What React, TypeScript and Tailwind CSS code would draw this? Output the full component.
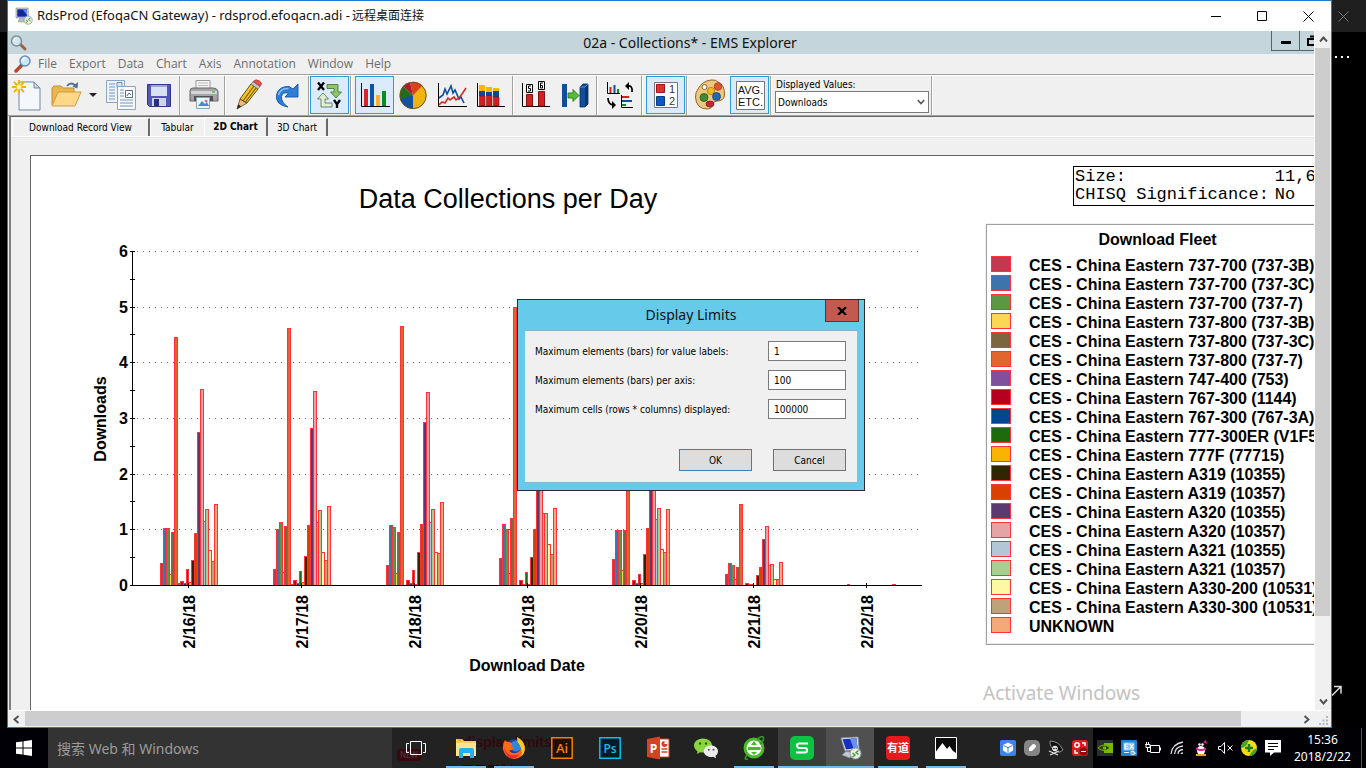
import React from "react";

type IconProps = { children: React.ReactNode };

const FLEET: { name: string; color: string }[] = [
  { name: "CES - China Eastern 737-700 (737-3B)", color: "#c3384f" },
  { name: "CES - China Eastern 737-700 (737-3C)", color: "#3d74a9" },
  { name: "CES - China Eastern 737-700 (737-7)", color: "#5b9744" },
  { name: "CES - China Eastern 737-800 (737-3B)", color: "#f9d854" },
  { name: "CES - China Eastern 737-800 (737-3C)", color: "#7b6640" },
  { name: "CES - China Eastern 737-800 (737-7)", color: "#e1662b" },
  { name: "CES - China Eastern 747-400 (753)", color: "#80509f" },
  { name: "CES - China Eastern 767-300 (1144)", color: "#b5001f" },
  { name: "CES - China Eastern 767-300 (767-3A)", color: "#00488d" },
  { name: "CES - China Eastern 777-300ER (V1F5", color: "#1e6b0c" },
  { name: "CES - China Eastern 777F (77715)", color: "#fab400" },
  { name: "CES - China Eastern A319 (10355)", color: "#332404" },
  { name: "CES - China Eastern A319 (10357)", color: "#d84100" },
  { name: "CES - China Eastern A320 (10355)", color: "#5a3a70" },
  { name: "CES - China Eastern A320 (10357)", color: "#e5a3a5" },
  { name: "CES - China Eastern A321 (10355)", color: "#b2c6d8" },
  { name: "CES - China Eastern A321 (10357)", color: "#a9cd90" },
  { name: "CES - China Eastern A330-200 (10531)", color: "#fff8a2" },
  { name: "CES - China Eastern A330-300 (10531)", color: "#bfa27a" },
  { name: "UNKNOWN", color: "#f3a978" },
];

const DAYS: { date: string; bars: number[] }[] = [
  { date: "2/16/18", bars: [22, 57, 57, 11, 53, 248, 2, 4, 2, 16, 3, 25, 52, 153, 196, 64, 76, 35, 24, 81] },
  { date: "2/17/18", bars: [16, 56, 63, 13, 59, 257, 1, 5, 2, 14, 3, 29, 60, 157, 194, 63, 75, 33, 25, 79] },
  { date: "2/18/18", bars: [20, 60, 58, 12, 53, 259, 0, 5, 2, 15, 1, 33, 61, 163, 193, 63, 76, 33, 32, 83] },
  { date: "2/19/18", bars: [27, 61, 56, 12, 67, 278, 0, 5, 1, 13, 1, 28, 56, 150, 190, 72, 72, 41, 31, 77] },
  { date: "2/20/18", bars: [26, 55, 55, 15, 55, 250, 0, 5, 2, 11, 2, 31, 57, 150, 190, 66, 77, 36, 33, 76] },
  { date: "2/21/18", bars: [11, 22, 20, 6, 18, 81, 0, 2, 1, 1, 0, 10, 18, 46, 59, 20, 21, 6, 6, 23] },
  { date: "2/22/18", bars: [0, 0, 0, 1, 0, 0, 0, 0, 0, 0, 0, 0, 0, 0, 0, 0, 0, 0, 0, 1] },
];

const BASE = 585;
const UNIT = 55.67;

function Chart() {
  const gridY = (n: number) => Math.round(BASE - n * UNIT);
  return (
    <svg
      viewBox="31 156 953 554"
      width={953}
      height={554}
      className="block shrink-0"
      role="img"
      aria-label="Data Collections per Day"
      fontFamily="'Liberation Sans', Arial, sans-serif"
    >
      <text x={508} y={208} textAnchor="middle" fontSize={27}>Data Collections per Day</text>
      {[1, 2, 3, 4, 5, 6].map((n) => (
        <line key={n} x1={137} x2={921} y1={gridY(n) + 0.5} y2={gridY(n) + 0.5} stroke="#707070" strokeDasharray="1 5" shapeRendering="crispEdges" />
      ))}
      <g fontSize={16} fontWeight={700}>
        {[0, 1, 2, 3, 4, 5, 6].map((n) => (
          <text key={n} x={128} y={gridY(n) + 6} textAnchor="end">{n}</text>
        ))}
        {DAYS.map((d, i) => {
          const x = 195 + i * 113;
          return (
            <text key={d.date} x={x} y={595} transform={`rotate(-90 ${x} 595)`} textAnchor="end">{d.date}</text>
          );
        })}
        <text x={527} y={671} textAnchor="middle">Download Date</text>
        <text x={106} y={419} textAnchor="middle" transform="rotate(-90 106 419)">Downloads</text>
      </g>
      <g shapeRendering="crispEdges">
        {DAYS.map((d, i) =>
          d.bars.map((h, j) => {
            if (h === 0) return null;
            const start = 160 + i * 113;
            const x = Math.round(start + j * 2.84);
            const next = Math.round(start + (j + 1) * 2.84);
            return (
              <rect key={`${i}-${j}`} x={x + 0.5} y={BASE - h + 0.5} width={next - x} height={h} fill={FLEET[j].color} stroke="#ff3237" />
            );
          }),
        )}
        <line x1={132.5} x2={132.5} y1={251} y2={586} stroke="#000" />
        <line x1={130} x2={922} y1={585.5} y2={585.5} stroke="#000" />
        {Array.from({ length: 13 }, (_, k) => {
          const y = Math.round(BASE - (k * UNIT) / 2) + 0.5;
          return <line key={k} x1={130} x2={135} y1={y} y2={y} stroke="#000" />;
        })}
        {DAYS.map((d, i) => (
          <line key={d.date} x1={188.5 + i * 113} x2={188.5 + i * 113} y1={583} y2={588} stroke="#000" />
        ))}
      </g>
    </svg>
  );
}

function Icon({ children }: IconProps) {
  return (
    <svg viewBox="0 0 35 34" width={35} height={34} className="block" aria-hidden="true">
      {children}
    </svg>
  );
}

function Tool({ label, active, children }: { label: string; active?: boolean; children: React.ReactNode }) {
  return (
    <button
      type="button"
      aria-label={label}
      className={
        active
          ? "h-[38px] w-[39px] shrink-0 border border-[#26a0da] bg-[#dcebfc] p-px"
          : "h-[38px] w-[39px] shrink-0 border border-transparent p-px"
      }
    >
      <Icon>{children}</Icon>
    </button>
  );
}

function Sep() {
  return (
    <div className="flex w-[6px] shrink-0 self-stretch pl-px" aria-hidden="true">
      <div className="w-0.5 border-l border-r border-l-[#a0a0a0] border-r-white" />
    </div>
  );
}

function Magnifier({ flip }: { flip?: boolean }) {
  return flip ? (
    <svg viewBox="0 0 18 18" width={18} height={18} aria-hidden="true">
      <path d="M8 10 2 16" stroke="#b5482f" strokeWidth="3.4" strokeLinecap="round" />
      <path d="M8 9 6.500 10.500" stroke="#555" strokeWidth="2.500" />
      <circle cx="11" cy="6" r="5" fill="#c9e9fa" stroke="#6b90b5" strokeWidth="1.500" />
      <path d="M8.500 6a3 3 0 0 1 3-3" stroke="#fff" strokeWidth="1.500" fill="none" />
    </svg>
  ) : (
    <svg viewBox="0 0 18 18" width={18} height={18} aria-hidden="true">
      <path d="m10 10 5 5" stroke="#a0623a" strokeWidth="3" strokeLinecap="round" />
      <circle cx="6.500" cy="7" r="5" fill="#d3e6f0" stroke="#7c8e99" strokeWidth="1.500" />
      <path d="M4 7a3 3 0 0 1 3-3" stroke="#fff" strokeWidth="1.200" fill="none" />
    </svg>
  );
}

function RdpIcon({ size, tilted }: { size: number; tilted?: boolean }) {
  return (
    <svg viewBox="0 0 24 24" width={size} height={size} aria-hidden="true">
      {tilted ? (
        <>
          <path d="M3 2 20 1l1 12-14 2z" fill="#e3e8ef" stroke="#8893a0" strokeWidth=".8" />
          <path d="m4.500 3.300 14-1L19.500 12 8 13.500z" fill="#1430c4" />
          <path d="m12 2.800 6.500-.5L19.500 12l-4 .5z" fill="#6d90f0" />
          <path d="M8 15.500 4 19l8 3 3-6z" fill="#c3cad4" stroke="#808a96" strokeWidth=".6" />
        </>
      ) : (
        <>
          <path d="M1.500 1.500h16v13h-16z" fill="#e3e8ef" stroke="#77808c" />
          <path d="M3 3h13v10H3z" fill="#12279c" />
          <path d="M10 3h6v8z" fill="#5f86e6" />
          <path d="M6 15h7v2.500h2.500V20h-11v-2.500H6z" fill="#b6bdc8" stroke="#77808c" strokeWidth=".6" />
        </>
      )}
      <circle cx="17.500" cy="17.500" r="5.500" fill="#e8ece8" stroke="#8f9892" />
      <path d="m14.500 17 2.500 2-2.500 2M20.500 14.500l-2.500 2 2.500 2" stroke="#3c9a2b" strokeWidth="1.300" fill="none" />
    </svg>
  );
}

function Toolbar() {
  return (
    <div className="flex h-[39px] shrink-0 items-start">
      <Tool label="New">
        <path d="M9 4h15l6 6v22H9z" fill="#f4f8fd" stroke="#7188a6" />
        <path d="M24 4v6h6z" fill="#c7d6e8" stroke="#7188a6" />
        <path d="M9 2v14M2 9h14M4 4l10 10M14 4 4 14" stroke="#f0b400" strokeWidth="1.800" />
        <circle cx="9" cy="9" r="2.500" fill="#fff3a0" />
      </Tool>
      <Tool label="Open">
        <path d="M3 27V10l2-2h7l2 2h11v5" fill="#e9b74e" stroke="#c18f32" />
        <path d="m3 28 6-14h23l-6 14z" fill="#fbd988" stroke="#cf9c3d" />
        <path d="M18 8q4-5 9 0" fill="none" stroke="#4e6e93" strokeWidth="1.800" />
        <path d="m29 4-.5 6.500-5-2z" fill="#4e6e93" />
      </Tool>
      <button type="button" aria-label="Open recent" className="flex h-[38px] w-[14px] shrink-0 items-center justify-center">
        <svg viewBox="0 0 8 4" width={8} height={4}><path d="M0 0h8L4 4z" fill="#222" /></svg>
      </button>
      <Tool label="Copy">
        <path d="M4.500 2.500h18v22h-18z" fill="#eef3fa" stroke="#8ba4c4" />
        <path d="M7 6h6M7 9h6M7 12h6M7 15h6M7 18h6M7 21h6" stroke="#7897bd" />
        <path d="M15 4.500h5v5h-5z" fill="#d8e6f5" stroke="#6d8db5" />
        <path d="M15.500 8.500h18v23h-18z" fill="#f6f9fd" stroke="#8ba4c4" />
        <path d="M18 12h4M18 15h4M18 18h4M18 22h13M18 25h13M18 28h13" stroke="#7897bd" />
        <path d="M23.500 12.500h7v7h-7z" fill="#fff" stroke="#5c6f88" />
        <path d="m25 18 2-3 2 2" stroke="#50658a" fill="none" />
      </Tool>
      <Tool label="Save">
        <path d="M6.500 6.500h23v22h-21l-2-2z" fill="#5357b8" stroke="#31358c" />
        <path d="M10 7h16v11H10z" fill="#d9e2f3" />
        <path d="M10 7h16v2H10z" fill="#9aa5d8" />
        <path d="M11 20h14v8H11z" fill="#cfd4e6" />
        <path d="M13 21h5v7h-5z" fill="#2b2e7c" />
      </Tool>
      <Sep />
      <Tool label="Print">
        <path d="M10 2.500h14V14H10z" fill="#f4f4f4" stroke="#999" />
        <path d="M12 5h10M12 7.500h10" stroke="#bbb" />
        <path d="M4 13q0-3 3-3h20q4 0 5 3v10H4z" fill="#a5a5a8" stroke="#66666a" />
        <path d="M5 13h26v3H5z" fill="#d6d6d8" />
        <path d="M8 18h19v5H8z" fill="#4f4f55" />
        <path d="M26 14h3" stroke="#4ec04e" strokeWidth="1.500" />
        <path d="M10.500 19.500h13v11h-13z" fill="#e9f4fc" stroke="#8aa" />
        <path d="m12 28 4-5 3 3 2-2 2 4z" fill="#3e8ed0" />
        <circle cx="20" cy="23" r="1.300" fill="#e58" />
      </Tool>
      <Sep />
      <Tool label="Annotate">
        <path d="M6 31 9 21l7 4z" fill="#e9b97f" stroke="#6e4a1b" strokeWidth=".8" />
        <path d="m6 31 1.200-4.500 3 1.800z" fill="#222" />
        <path d="M9 21 20 6l7 5-11 14z" fill="#f4c521" stroke="#53400c" strokeWidth=".9" />
        <path d="m12 23 11-15M14.500 24 25 10" stroke="#7a5c0c" strokeWidth="1.200" />
        <path d="m20 6 2-2.500 7 5-2 2.500z" fill="#c3c9d2" stroke="#666" strokeWidth=".7" />
        <path d="M22 3.500q3-3 6.500-.5T29 8.500z" fill="#e8504c" stroke="#a3302d" strokeWidth=".7" />
      </Tool>
      <Tool label="Redo">
        <path d="M18 29Q5 27 6.500 16.500 9 8 19 8.500L23 11l5-5v13H15l3.500-3.800q-6-1.700-7 3.300-.5 6 6.500 10.500z" fill="#2e7fd4" stroke="#1455a4" strokeWidth=".9" />
        <path d="M8.500 17q2-7 10-6.500" stroke="#8dc0f2" strokeWidth="1.500" fill="none" />
      </Tool>
      <div className="flex w-[3px] shrink-0 self-stretch pl-px" aria-hidden="true">
        <div className="w-0.5 border-l border-r border-l-[#a0a0a0] border-r-white" />
      </div>
      <Tool label="Swap X and Y" active>
        <path d="m6 4.500 6 7.500M12 4.500 6 12" stroke="#000" strokeWidth="2.300" />
        <path d="m22 22 3 4.200 3-4.200M25 26v4" stroke="#000" strokeWidth="2.300" fill="none" />
        <path d="M15 6.500h11V14h3.500L24 20l-5.500-6H22v-3.500h-7z" fill="#8cc66a" stroke="#4c7a34" strokeWidth=".9" />
        <path d="M20 29H9v-8H5.500L11 15l5.500 6H13v4h7z" fill="#e2efd8" stroke="#5d7a4c" strokeWidth=".9" />
      </Tool>
      <Sep />
      <Tool label="Bar chart" active>
        <path d="M4.500 5v23.500H33" stroke="#000" fill="none" />
        <path d="M7 11h4v17H7z" fill="#d8242a" />
        <path d="M13 6h4v22h-4z" fill="#0c53ad" />
        <path d="M19 17h4v11h-4z" fill="#fbb034" />
        <path d="M25 13h4v15h-4z" fill="#0a8f1c" />
      </Tool>
      <Tool label="Pie chart">
        <path d="M17 17.500V31A13.500 13.500 0 0 1 4 17.500z" fill="#1450a0" />
        <path d="M17 17.500V31a13.500 13.500 0 0 0 9-23.500z" fill="#f0b411" />
        <path d="m17 17.500 9.500-10A13.500 13.500 0 0 0 14 4.200z" fill="#d8431c" />
        <path d="M17 17.500 14 4.200A13 13 0 0 0 7 8z" fill="#b8182a" />
        <path d="M17 17.500 7 8q-4 5-3 13z" fill="#1d6f1d" />
        <circle cx="17" cy="17.500" r="13.200" fill="none" stroke="#6b5520" />
      </Tool>
      <Tool label="Line chart">
        <path d="M3.500 5v23.500H32" stroke="#000" fill="none" />
        <path d="m4 20 4-3 2-6 2 5 4-8 2 7 2-3 4 9 2-2 3 6" stroke="#0c4ea2" strokeWidth="1.600" fill="none" />
        <path d="m4 27 3-3 3 1 3-5 2 2 4-3 2 3 3-2 3-4 4-6" stroke="#d42a2a" strokeWidth="1.600" fill="none" />
      </Tool>
      <Tool label="Stacked chart">
        <path d="M3.500 5v23.500H31" stroke="#000" fill="none" />
        <path d="M5 7h6v6H5zM12 9h6v5h-6zM19 10h6v4h-6z" fill="#fbb400" />
        <path d="M5 13h6v5H5zM12 14h6v4h-6zM19 13h6v6h-6z" fill="#0b479a" />
        <path d="M5.500 18h5.500v10H5.500zM12.500 17.500H18V28h-5.500zM19.500 19H25v9h-5.500z" fill="#cf2020" stroke="#7e1414" strokeWidth=".6" />
      </Tool>
      <Sep />
      <Tool label="Value labels">
        <path d="M3.500 5v23.500H31" stroke="#000" fill="none" />
        <path d="M7.500 16.500h6V28h-6zM19.500 13.500h6V28h-6z" fill="#d42020" stroke="#7e1414" />
        <path d="M7.500 6.500h6v8h-6zM19.500 3.500h6v8h-6z" fill="#fff" stroke="#000" />
        <path d="M12 8H9.500v2.500h2v2.500H9M24 5h-2.500v5h2V7.500h-2" stroke="#000" fill="none" />
      </Tool>
      <Tool label="3D bars">
        <path d="M4 6h5v23H4z" fill="#0f4f9e" />
        <path d="M10 15h5v-3.500l6 6-6 6V20h-5z" fill="#58bc3b" stroke="#2b7a1e" strokeWidth=".9" />
        <path d="m22 9 3-3h5v20l-3 3h-5z" fill="#0f4f9e" stroke="#08284f" strokeWidth=".8" />
        <path d="m27 9 3-3v20l-3 3z" fill="#07356f" />
        <path d="M22 9h5l3-3" stroke="#5a93d4" fill="none" />
      </Tool>
      <Sep />
      <Tool label="Rotate chart">
        <path d="M4.500 4v11.500H17" stroke="#000" fill="none" />
        <path d="M7.500 9v6" stroke="#d42020" strokeWidth="2" />
        <path d="M11.500 7v8" stroke="#0c4ea2" strokeWidth="2" />
        <path d="M15 11v4" stroke="#0a8f1c" strokeWidth="2" />
        <path d="M18.500 17v12.500H30" stroke="#000" fill="none" />
        <path d="M19 19h7" stroke="#d42020" strokeWidth="2" />
        <path d="M19 23h10" stroke="#0c4ea2" strokeWidth="2" />
        <path d="M19 27h4" stroke="#0a8f1c" strokeWidth="2" />
        <path d="M24 8q6-1 5 6M5 20q0 6 5 7" stroke="#000" strokeWidth="1.700" fill="none" />
        <path d="m22 8 4-4v8zM13 27l-4-4v8z" fill="#000" />
      </Tool>
      <Sep />
      <Tool label="Legend" active>
        <path d="M6.500 4.500h23v25h-23z" fill="#fff" stroke="#777" />
        <path d="M8.500 6.500h8v8h-8z" fill="#e23030" stroke="#9d1515" />
        <path d="M8.500 18.500h8v9h-8z" fill="#0c5ac0" stroke="#0a3d80" />
        <text x="21" y="15" fontSize="11" fill="#333" fontFamily="'Liberation Sans', sans-serif">1</text>
        <text x="21" y="27" fontSize="11" fill="#333" fontFamily="'Liberation Sans', sans-serif">2</text>
      </Tool>
      <Sep />
      <Tool label="Colors">
        <path d="M5 11q4-8 13-9 5-.5 7 2 7 3 6.500 13-.5 6-7.500 6-4 0-4.500 4-1 4-5 4Q3 31 2.500 19 2.500 14 5 11z" fill="#eec77e" stroke="#8c6428" />
        <circle cx="11.500" cy="9" r="2.500" fill="#fff" stroke="#8c6428" />
        <circle cx="25" cy="8.500" r="3.800" fill="#e3552c" stroke="#93341a" strokeWidth=".7" />
        <circle cx="18" cy="13" r="3.600" fill="#f5b921" stroke="#9c7008" strokeWidth=".7" />
        <circle cx="11" cy="19.500" r="4" fill="#3d8b37" stroke="#1d541a" strokeWidth=".7" />
        <circle cx="23.500" cy="18.500" r="4" fill="#2467b5" stroke="#123b70" strokeWidth=".7" />
        <ellipse cx="17" cy="26" rx="4" ry="3" fill="#c92439" stroke="#781020" strokeWidth=".7" />
      </Tool>
      <Tool label="Statistics" active>
        <path d="M4.500 3.500h28v28h-28z" fill="#fff" stroke="#777" />
        <g fontFamily="'Liberation Sans', sans-serif" fontSize="11" fill="#111">
          <text x="18.500" y="16" textAnchor="middle">AVG.</text>
          <text x="18.500" y="28" textAnchor="middle">ETC.</text>
        </g>
      </Tool>
      <Sep />
      <div className="mr-px flex w-[154px] shrink-0 flex-col pt-[3px] font-['DejaVu_Sans_Condensed','Noto_Sans',sans-serif]">
        <label htmlFor="displayed" className="h-3 pl-px text-[10px] leading-3 text-black">Displayed Values:</label>
        <div className="relative">
          <select id="displayed" defaultValue="Downloads" className="block h-[22px] w-full appearance-none border border-[#7a7a7a] bg-white pl-[2px] text-[10px] text-black">
            <option>Downloads</option>
          </select>
          <svg viewBox="0 0 8 6" width={8} height={6} className="pointer-events-none absolute right-1 top-2" aria-hidden="true">
            <path d="m.8 1 3.200 3.500L7.200 1" fill="none" stroke="#555" strokeWidth="1.600" />
          </svg>
        </div>
      </div>
      <Sep />
    </div>
  );
}

function LimitField({ id, label, value }: { id: string; label: string; value: string }) {
  return (
    <div className="flex h-5 items-center justify-between">
      <label htmlFor={id}>{label}</label>
      <input id={id} defaultValue={value} className="h-5 w-[78px] border border-[#7a7a7a] bg-white pl-[5px] text-[10px]" />
    </div>
  );
}

function LimitsDialog() {
  return (
    <div role="dialog" aria-labelledby="limits-title" className="absolute left-[509px] top-[268px] w-[348px] border border-[#2b2b33] bg-[#66caea] px-[7px] pb-[7px]">
      <div className="flex h-[30px] items-center justify-center">
        <h2 id="limits-title" className="text-[14px] leading-none text-[#111]">Display Limits</h2>
      </div>
      <button type="button" aria-label="Close" className="absolute right-[5px] top-0 flex h-[22px] w-[34px] items-center justify-center border border-t-0 border-[#5b3536] bg-[#c35a50]">
        <svg viewBox="0 0 10 8" width={10} height={8}><path d="m1 0 8 8M9 0 1 8" stroke="#000" strokeWidth="2.200" /></svg>
      </button>
      <form className="flex flex-col gap-[9px] border-b border-t border-[#86b4cf] bg-[#f0f0f0] pb-[11px] pl-[10px] pr-[11px] pt-[10px] font-['DejaVu_Sans_Condensed','Noto_Sans',sans-serif] text-[10px] text-black" onSubmit={(e) => e.preventDefault()}>
        <LimitField id="max-labels" label="Maximum elements (bars) for value labels:" value="1" />
        <LimitField id="max-axis" label="Maximum elements (bars) per axis:" value="100" />
        <LimitField id="max-cells" label="Maximum cells (rows * columns) displayed:" value="100000" />
        <div className="flex justify-end gap-[21px] pt-[21px]">
          <button type="submit" className="h-[22px] w-[73px] border border-[#3c7fb1] bg-[#ddd]">OK</button>
          <button type="button" className="h-[22px] w-[73px] border border-[#707070] bg-[#ddd]">Cancel</button>
        </div>
      </form>
    </div>
  );
}

function Legend() {
  return (
    <div className="ml-px mt-[17px] w-[341px] border border-[#f0f0f0] border-b-[#a0a0a0]">
      <div className="border border-[#a0a0a0] border-b-[#e8e8e8] pb-[7px] pl-1 text-[16px] font-bold text-black">
        <h2 className="pb-[7px] pt-[5px] text-center leading-[19px]">Download Fleet</h2>
        <ul>
          {FLEET.map((f) => (
            <li key={f.name} className="flex h-[19px] items-start gap-[18px] whitespace-nowrap leading-[19px]">
              <span className="h-4 w-5 shrink-0 border border-[#ff3237]" style={{ backgroundColor: f.color }} />
              <span>{f.name}</span>
            </li>
          ))}
        </ul>
      </div>
    </div>
  );
}

function ExplorerWindow() {
  return (
    <div className="relative flex min-w-0 flex-1 flex-col overflow-hidden bg-[#f0f0f0] font-['Noto_Sans',sans-serif]">
      <div className="relative flex h-[23px] shrink-0 items-center bg-[#c4d5dc] pl-[2px]">
        <Magnifier />
        <h1 className="flex-1 pl-[38px] text-center text-[14px] leading-none text-[#111]">02a - Collections* - EMS Explorer</h1>
        <div className="absolute right-0 top-0 flex h-5 w-[43px] overflow-hidden border-b border-l border-[#5a6468]">
          <button type="button" aria-label="Minimize" className="flex h-full w-7 shrink-0 items-center justify-center border-r border-[#5a6468]">
            <svg viewBox="0 0 10 6" width={10} height={6}><path d="M0 3h10v3H0z" /></svg>
          </button>
          <button type="button" aria-label="Restore" className="flex h-full w-7 shrink-0 items-center pl-[7px]">
            <svg viewBox="0 0 12 12" width={12} height={12}><path d="M1 4h8v6H1zM3 1.500h8V7" fill="none" stroke="#000" strokeWidth="2" /></svg>
          </button>
        </div>
      </div>
      <nav className="flex h-5 shrink-0 items-center pl-[6px] text-[12px] text-[#6d6d6d]">
        <Magnifier flip />
        <div className="flex gap-3 pl-[6px] font-['Open_Sans',sans-serif]">
          {["File", "Export", "Data", "Chart", "Axis", "Annotation", "Window", "Help"].map((m) => (
            <button key={m} type="button">{m}</button>
          ))}
        </div>
      </nav>
      <div className="shrink-0 border-b border-t border-b-[#a0a0a0] border-t-[#a0a0a0]">
        <div className="border-t border-white"><Toolbar /></div>
      </div>
      <div className="ml-px flex min-h-0 flex-1 flex-col border-l-2 border-t border-l-[#808080] border-t-[#696969]">
        <div role="tablist" className="flex h-5 shrink-0 items-end border-b border-white pl-px font-['DejaVu_Sans_Condensed','Noto_Sans',sans-serif] text-[10px] leading-4 text-black">
          <button role="tab" type="button" className="h-[18px] w-[138px] border-l border-r-2 border-t border-l-white border-r-[#696969] border-t-white">Download Record View</button>
          <button role="tab" type="button" className="h-[18px] w-[54px] border-l border-t border-white">Tabular</button>
          <button role="tab" type="button" aria-selected="true" className="h-[19px] w-[64px] border-l border-r-2 border-t border-l-white border-r-[#696969] border-t-white font-bold">2D Chart</button>
          <button role="tab" type="button" className="h-[18px] w-[60px] border-r-2 border-t border-r-[#696969] border-t-white">3D Chart</button>
        </div>
        <div className="flex min-h-0 flex-1 border-t border-[#e3e3e3] pl-[19px] pt-[17px]">
          <div className="flex min-w-0 flex-1 overflow-hidden border-l border-t border-[#646464] bg-white font-['Liberation_Sans',Arial,sans-serif]">
            <Chart />
            <div className="min-w-0 flex-1 pt-[10px]">
              <dl className="ml-[89px] grid w-[280px] grid-cols-[auto_1fr] gap-x-[6px] border border-black py-px pl-px font-['Liberation_Mono','Courier_New',monospace] text-[17px] leading-[18px] text-black">
                <dt>Size:</dt>
                <dd>11,6</dd>
                <dt>CHISQ Significance:</dt>
                <dd>No</dd>
              </dl>
              <Legend />
            </div>
          </div>
        </div>
      </div>
      <p className="pointer-events-none absolute bottom-[3px] right-[174px] text-[19px] leading-7 text-[#c3c3c3]">Activate Windows</p>
      <LimitsDialog />
    </div>
  );
}

function Chevron({ d }: { d: string }) {
  return (
    <svg viewBox="0 0 9 9" width={9} height={9} aria-hidden="true">
      <path d={d} fill="none" stroke="#505050" strokeWidth="1.900" />
    </svg>
  );
}

function RemoteWindow() {
  return (
    <main className="flex min-w-0 flex-1 flex-col border border-[#1c7cd0] bg-white">
      <header className="flex h-[30px] shrink-0 items-center pl-[7px] font-['Noto_Sans','Noto_Sans_CJK_SC',sans-serif]">
        <RdpIcon size={18} />
        <span className="flex items-baseline gap-0.5 pl-1 text-[#111]">
          <span className="text-[13px]">RdsProd (EfoqaCN Gateway) - rdsprod.efoqacn.adi -</span>
          <span className="text-[12px]">远程桌面连接</span>
        </span>
        <div className="ml-auto flex h-full">
          <button type="button" aria-label="Minimize" className="flex w-[46px] items-center justify-center"><svg viewBox="0 0 11 11" width={11} height={11}><path d="M0 5.500h10" stroke="#000" /></svg></button>
          <button type="button" aria-label="Maximize" className="flex w-[46px] items-center justify-center"><svg viewBox="0 0 11 11" width={11} height={11}><path d="M.5.5h9v9h-9z" fill="none" stroke="#000" /></svg></button>
          <button type="button" aria-label="Close" className="flex w-[46px] items-center justify-center"><svg viewBox="0 0 11 11" width={11} height={11}><path d="m.5.5 10 10m0-10-10 10" stroke="#000" /></svg></button>
        </div>
      </header>
      <div className="flex min-h-0 flex-1">
        <ExplorerWindow />
        <div className="ml-px flex w-4 shrink-0 flex-col items-center bg-[#f0f0f0]">
          <div className="flex h-[17px] items-center"><Chevron d="m1 6.500 3.500-4L8 6.500" /></div>
          <div className="flex min-h-0 w-full flex-1 flex-col"><div className="h-[88%] w-[15px] bg-[#cdcdcd]" /></div>
          <div className="flex h-[17px] items-center"><Chevron d="m1 2.500 3.500 4L8 2.500" /></div>
        </div>
      </div>
      <div className="mt-px flex h-4 shrink-0 items-center bg-[#f0f0f0]">
        <div className="flex w-[17px] justify-center"><Chevron d="m6.500 1-4 3.500 4 3.500" /></div>
        <div className="flex h-[15px] flex-1 self-start"><div className="w-[95.5%] bg-[#cdcdcd]" /></div>
        <div className="flex w-[17px] justify-center"><Chevron d="m2.500 1 4 3.500-4 3.500" /></div>
        <div className="flex w-4 justify-end self-end pb-[2px] pr-[3px]">
          <svg viewBox="0 0 9 9" width={9} height={9} aria-hidden="true"><path d="M7 0h2v2H7zM3.500 3.500h2v2h-2zM7 3.500h2v2H7zM0 7h2v2H0zM3.500 7h2v2h-2zM7 7h2v2H7z" fill="#b8b8b8" /></svg>
        </div>
      </div>
    </main>
  );
}

function AppButton({ label, state, children }: { label: string; state?: "open" | "bright" | "active"; children: React.ReactNode }) {
  const bg = state === "active" ? "bg-[#505050]" : state === "bright" ? "bg-[#3c3c3c]" : "";
  return (
    <button type="button" aria-label={label} className={`flex h-full w-12 shrink-0 flex-col items-center ${bg}`}>
      <span className="flex flex-1 items-center justify-center pt-0.5">{children}</span>
      {state === "open" && <span className="h-0.5 w-10 bg-[#76b9ed]" />}
      {(state === "bright" || state === "active") && <span className="h-0.5 w-full bg-[#76b9ed]" />}
      {!state && <span className="h-0.5" />}
    </button>
  );
}

function Art({ children }: IconProps) {
  return <svg viewBox="0 0 24 24" width={24} height={24} aria-hidden="true">{children}</svg>;
}

function Tray({ children, label }: { children: React.ReactNode; label: string }) {
  return (
    <button type="button" aria-label={label} className="flex w-6 shrink-0 justify-center">
      <svg viewBox="0 0 16 16" width={16} height={16}>{children}</svg>
    </button>
  );
}

function Taskbar() {
  return (
    <footer className="relative z-0 flex h-10 shrink-0 bg-[#222] font-['Noto_Sans','Noto_Sans_CJK_SC',sans-serif]">
      <div className="pointer-events-none absolute left-[392px] top-0 -z-10 h-10 w-[170px] overflow-hidden" aria-hidden="true">
        <span className="absolute left-[5px] top-[21px] rounded bg-[#38090c] px-[3px] text-[8px] leading-3 text-[#5c3a3a]">NEW</span>
        <span className="absolute left-[71px] top-1 whitespace-nowrap font-['Liberation_Sans',sans-serif] text-[14px] font-bold leading-5 text-[#30090d]">display limits</span>
        <span className="absolute left-[69px] top-[32px] whitespace-nowrap text-[13px] leading-5 text-[#080808]">显示限制</span>
      </div>
      <button type="button" aria-label="Start" className="flex w-12 shrink-0 items-center justify-center bg-[#000006]">
        <svg viewBox="0 0 16 16" width={16} height={16}><path d="M0 2.300 6.500 1.400v6.100H0zM7.500 1.200 16 0v7.500H7.500zM0 8.500h6.500v6.100L0 13.700zM7.500 8.500H16V16l-8.500-1.200z" fill="#fff" /></svg>
      </button>
      <input aria-label="搜索 Web 和 Windows" placeholder="搜索 Web 和 Windows" className="w-[344px] shrink-0 bg-[#333] px-[9px] text-[14px] text-white outline-none placeholder:text-[#9b9b9b]" />
      <button type="button" aria-label="Task view" className="mr-[2px] flex w-12 shrink-0 items-center justify-center">
        <svg viewBox="0 0 20 14" width={20} height={14}><path d="M4.500.5h11v13h-11zM3 2.500H.5v9H3M17 2.500h2.500v9H17" fill="none" stroke="#fff" /></svg>
      </button>
      <AppButton label="File Explorer" state="open">
        <Art>
          <path d="M2 3h6l2 2h12v14H2z" fill="#f5cd5c" />
          <path d="M2 7h20v13H2z" fill="#ffe390" />
          <path d="M4 4h3" stroke="#e9a02c" strokeWidth="1.500" />
          <path d="M5 22v-8q0-2 2-2h11q2 0 2 2v8h-4v-5h-7v5z" fill="#1fb2f0" />
        </Art>
      </AppButton>
      <AppButton label="Firefox" state="open">
        <Art>
          <circle cx="12" cy="12" r="9" fill="#243c92" />
          <circle cx="14" cy="10" r="5.500" fill="#2f86dc" />
          <path d="M3 4Q4 6 6.500 6q3 0 4 2l-1.500 2q2 .5 3 2-2 3-5 2 2 4 7 3 6-2 5-8-.5-4-3.500-7Q23 6 23 13q-1 9-11 10Q3 22 1 13 .6 7 3 4z" fill="#ff6a14" />
          <path d="M15 1q6 3 7.500 9 1 6-3 10 1-4-.5-8T15.500 6z" fill="#ffcb1f" />
          <path d="M2 10q1 7 7 9 5 1 8-1-2 5-8 4-7-3-7-12z" fill="#e82a3c" />
        </Art>
      </AppButton>
      <AppButton label="Illustrator">
        <Art><path d="M1.800 1.800h20.400v20.400H1.800z" fill="#1f0f00" stroke="#f37e10" strokeWidth="1.500" /><text x="12" y="17" fontSize="13" fontWeight="600" fill="#f37e10" textAnchor="middle" fontFamily="'Open Sans', sans-serif">Ai</text></Art>
      </AppButton>
      <AppButton label="Photoshop">
        <Art><path d="M1.800 1.800h20.400v20.400H1.800z" fill="#041b26" stroke="#10bdf0" strokeWidth="1.500" /><text x="12" y="17" fontSize="12" fontWeight="600" fill="#10bdf0" textAnchor="middle" fontFamily="'Open Sans', sans-serif">Ps</text></Art>
      </AppButton>
      <AppButton label="PowerPoint">
        <Art>
          <path d="M13 3h10v18H13z" fill="#fff" stroke="#d14424" />
          <path d="M15.500 13h6M15.500 16h6" stroke="#d14424" strokeWidth="1.500" />
          <circle cx="18.500" cy="8" r="3" fill="#d14424" />
          <path d="M18.500 8V5a3 3 0 0 1 3 3z" fill="#fff" />
          <path d="M1 3 14 .5v23L1 21z" fill="#d14424" />
          <text x="7.500" y="16.500" fontSize="12" fontWeight="700" fill="#fff" textAnchor="middle" fontFamily="'Open Sans', sans-serif">P</text>
        </Art>
      </AppButton>
      <AppButton label="WeChat">
        <Art>
          <path d="M9 2.500c-5 0-9 3-9 7 0 2.500 1.500 4.500 3.500 5.700L3 18l3.200-1.800q1.300.4 3 .4c5 0 8.800-3 8.800-7s-4-7.100-9-7.100z" fill="#8bd540" />
          <circle cx="6" cy="7.500" r="1.200" fill="#2f5c10" /><circle cx="12" cy="7.500" r="1.200" fill="#2f5c10" />
          <path d="M17 9.500c4 0 7 2.500 7 5.800 0 2-1 3.500-2.500 4.500l.5 2.400-2.800-1.400q-1 .3-2.200.3c-4 0-7.200-2.600-7.200-5.800s3.200-5.800 7.200-5.800z" fill="#ececec" />
          <circle cx="14.800" cy="13.800" r="1" fill="#555" /><circle cx="19.500" cy="13.800" r="1" fill="#555" />
        </Art>
      </AppButton>
      <AppButton label="360 Browser" state="open">
        <Art>
          <circle cx="12" cy="12" r="9" fill="#f4fbf0" stroke="#49b82d" strokeWidth="3" />
          <path d="M6 12.500h12.500" stroke="#49b82d" strokeWidth="3" />
          <path d="m12 5 3 4H9zM12 19l3-3H9z" fill="#49b82d" />
          <path d="M5 19Q1 24 6 23M15 3q6-4 6.500-1T18 8" fill="none" stroke="#2f9422" strokeWidth="1.700" />
        </Art>
      </AppButton>
      <AppButton label="WPS Spreadsheets" state="bright">
        <Art><rect x="0" y="0" width="24" height="24" rx="5" fill="#0dc143" /><path d="M18 7.500H9Q7 7.500 7 9.500T9 12h6q2 0 2 2.200t-2 2.300H6" fill="none" stroke="#fff" strokeWidth="2" /></Art>
      </AppButton>
      <AppButton label="Remote Desktop" state="active"><RdpIcon size={24} tilted /></AppButton>
      <AppButton label="有道词典" state="open">
        <Art><rect x="0" y="0" width="24" height="24" rx="4" fill="#e51a1c" /><text x="12" y="16" fontSize="11" fontWeight="700" fill="#fff" textAnchor="middle" fontFamily="'Noto Sans CJK SC', sans-serif">有道</text></Art>
      </AppButton>
      <AppButton label="Photos" state="open">
        <Art><path d="M1.500 1.500h21v21h-21z" fill="#0b0b0b" stroke="#fff" /><path d="M2 15.500 8.500 7l4.500 6 2.500-3 3 4.500 4 3V22H2z" fill="#fff" /></Art>
      </AppButton>
      <div className="ml-auto flex items-center">
        <div className="flex w-[97px]">
          <Tray label="Virtual box"><rect width="16" height="16" rx="2" fill="#3c82f0" /><path d="m8 2.500 5 2.500v5.500L8 13.500l-5-3V5z" fill="#fff" /><path d="m3.500 5.300 4.500 2.500 4.500-2.500M8 8v5" stroke="#3c82f0" fill="none" /></Tray>
          <Tray label="Pen tool"><rect width="16" height="16" rx="5" fill="#858585" /><path d="M5 11V8l4-4q3 0 3 3l-4 4z" fill="#fff" /></Tray>
          <Tray label="Penguin"><path d="M2 1q9 0 13 9-3 3-6 2Q1 7 2 1z" fill="#111" stroke="#aaa" strokeWidth=".8" /><circle cx="7" cy="8.500" r="2.800" fill="#eee" /><circle cx="6" cy="8.500" r=".8" fill="#111" /><circle cx="8.200" cy="8.500" r=".8" fill="#111" /><path d="m1 11 9 4m-8 0 9-4" stroke="#ddd" strokeWidth="1.300" /></Tray>
          <Tray label="Recorder"><rect width="16" height="16" rx="3" fill="#dd1c20" /><circle cx="5" cy="5" r="2.200" fill="none" stroke="#fff" strokeWidth="1.500" /><path d="M10 3h3v3M3 10v3h3" stroke="#fff" fill="none" strokeWidth="1.500" /><circle cx="11.500" cy="11.500" r="4" fill="#8e0c10" /><path d="M9 11.500h5" stroke="#fff" /></Tray>
        </div>
        <div className="flex h-full items-center bg-[#000005]">
          <Tray label="NVIDIA"><path d="M0 0h16v16H0z" fill="#2b2f33" /><path d="M7 3h9v10H7z" fill="#76b900" /><path d="M1 8q6-6 12 0-6 5-12 0z" fill="#2b3a10" stroke="#76b900" /><circle cx="7.500" cy="8" r="1.800" fill="#76b900" /></Tray>
          <Tray label="Graphics"><rect width="16" height="16" rx="1" fill="#1d83d0" /><path d="M2.500 2.500h11v8h-11z" fill="#8cc8f2" /><path d="M4 4h3.500M4 4v5h3.500M4 6.500h3M9 4l3.500 5M12.500 4 9 9" stroke="#fff" strokeWidth="1.200" fill="none" /><path d="M3 12.500h5M9.500 12.500q2-2 4 0t-4 1.500" stroke="#e8f4ff" strokeWidth="1.200" fill="none" /></Tray>
          <Tray label="Battery"><path d="M5.500 5.500h9v7h-9zM15.500 7.500v3" stroke="#fff" fill="none" /><path d="M0 4.500h5v3H1v-3M1.500 2v2.500M3.500 2v2.500M2.500 8v3.500h3" stroke="#fff" fill="none" /></Tray>
          <Tray label="Network"><path d="M2 14Q3 4 14 2M5.500 14Q6 7 14 6M9 14q0-4 5-4.500M12 14q0-1 2-1" stroke="#ddd" strokeWidth="1.300" fill="none" /></Tray>
          <Tray label="QQ"><path d="M3 8q0-6 5-6t5 6l1 4-2 2H4l-2-2z" fill="#111" /><ellipse cx="8" cy="10.500" rx="4" ry="4.500" fill="#fff" /><path d="M3 7.500q5 3 10 0v2q-5 3-10 0zM10 2l3-2 1 4z" fill="#f0149b" /><circle cx="6.500" cy="4.500" r="1.200" fill="#fff" /><circle cx="9.500" cy="4.500" r="1.200" fill="#fff" /><path d="M3 15h10" stroke="#f0a020" strokeWidth="2" /></Tray>
          <Tray label="Volume"><path d="M1.500 6.500H4l3.500-4v11L4 9.500H1.500zM10.500 5.500l5 5m0-5-5 5" stroke="#fff" fill="none" /></Tray>
          <Tray label="360 Safe"><circle cx="8" cy="8" r="8" fill="#f6dc12" /><path d="M8 0a8 8 0 0 0-8 8q5 0 8-8zM16 8a8 8 0 0 1-8 8q3-6 8-8z" fill="#3da82b" /><path d="M8 4v8M4 8h8" stroke="#1d7d18" strokeWidth="2.500" /></Tray>
          <Tray label="Notifications"><path d="M0 0h16v12.500H9L5 16v-3.500H0z" fill="#fff" /><path d="M3 3.500h10M3 6.500h10M3 9.500h6" stroke="#000" /></Tray>
          <div className="w-[75px] text-center text-[12px] leading-[17px] text-white">
            <div>15:36</div>
            <div>2018/2/22</div>
          </div>
          <div className="ml-px h-full border-l border-[#555] pr-1" />
        </div>
      </div>
    </footer>
  );
}

export default function App() {
  return (
    <div className="flex h-screen flex-col overflow-hidden bg-black">
      <div className="flex min-h-0 flex-1">
        <div className="w-[7px] shrink-0"><div className="h-8 bg-[#1f1f1f]" /></div>
        <RemoteWindow />
        <aside className="flex w-[34px] shrink-0 flex-col">
          <button type="button" aria-label="Close background window" className="flex h-8 items-center bg-[#1f1f1f] pl-[6px]">
            <svg viewBox="0 0 11 11" width={11} height={11}><path d="m.5.5 10 10m0-10-10 10" stroke="#777" /></svg>
          </button>
          <button type="button" aria-label="More" className="mt-6 pl-[3px]">
            <svg viewBox="0 0 14 2" width={14} height={2} className="block"><path d="M0 0h2v2H0zM6 0h2v2H6zM12 0h2v2h-2z" fill="#fff" /></svg>
          </button>
          <button type="button" aria-label="Expand" className="mb-8 mt-auto">
            <svg viewBox="0 0 10 11" width={10} height={11} className="block"><path d="M0 10.500 9 1.500M2 1.500h7v7" fill="none" stroke="#ddd" strokeWidth="1.500" /></svg>
          </button>
        </aside>
      </div>
      <Taskbar />
    </div>
  );
}
